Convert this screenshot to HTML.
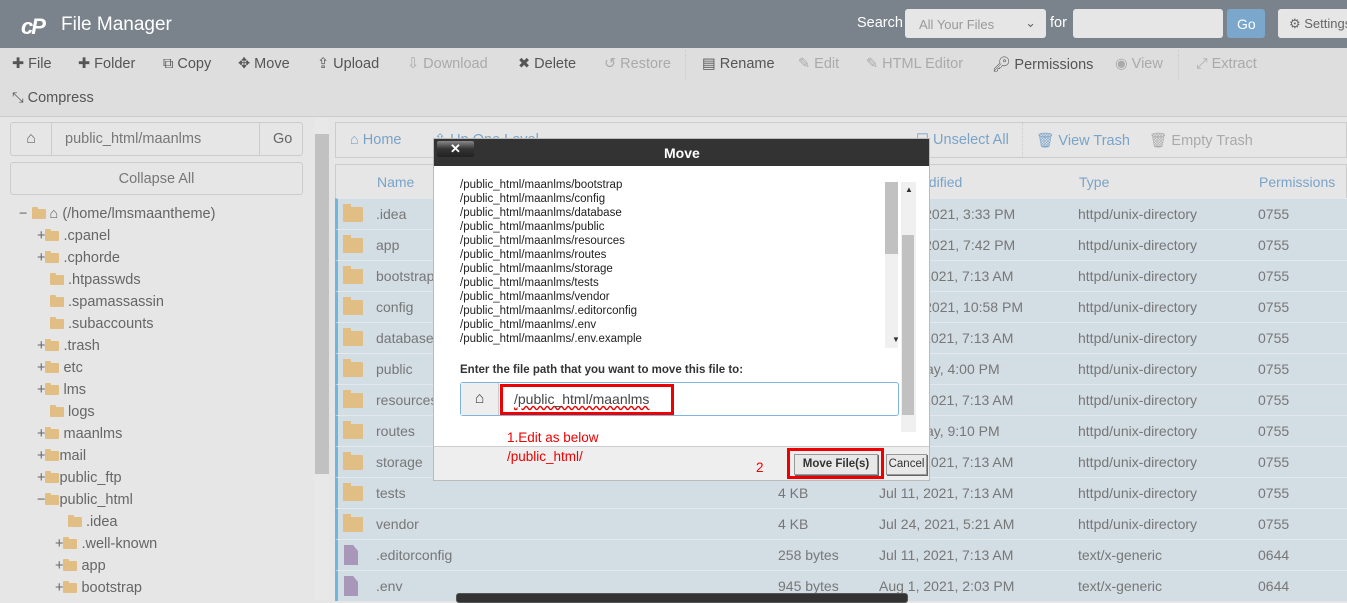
<!DOCTYPE html>
<html><head><meta charset="utf-8">
<style>
*{box-sizing:border-box;margin:0;padding:0}
body{width:1347px;height:600px;overflow:hidden;position:relative;background:#e6e6e6;font-family:"Liberation Sans",sans-serif;color:#666}
.abs{position:absolute}
#top{left:0;top:0;width:1347px;height:48px;background:#7a838b}
#tb{left:0;top:48px;width:1347px;height:69px;background:#dedede;border-bottom:1px solid #ccc}
.tbi{position:absolute;font-size:14.5px;color:#555;white-space:nowrap}
.dis{color:#aaa}
.fold{display:inline-block;width:14px;height:10px;background:#e1be84;border-radius:1px;position:relative;vertical-align:-1px}
.fold:before{content:"";position:absolute;left:0;top:-2px;width:6px;height:3px;background:#e1be84;border-radius:1px 1px 0 0}
.tree{position:absolute;font-size:14.5px;color:#666;white-space:nowrap}
.row{position:absolute;left:335px;width:1012px;height:31px;background:#d3dde4;border-top:1px solid #e2e8ec;border-left:3px solid #6fb6dc;font-size:14px;color:#777}
.row span{position:absolute;top:7px}
.bf{position:absolute;left:5px;top:8px;width:20px;height:15px;background:#e1be84;border-radius:1px}
.bf:before{content:"";position:absolute;left:0;top:-3px;width:8px;height:4px;background:#e1be84}
.doc{position:absolute;left:6px;top:5px;width:14px;height:20px;background:#a897b8;clip-path:polygon(0 0,65% 0,100% 30%,100% 100%,0 100%)}
#dlg{left:433px;top:138px;width:497px;height:343px;background:#fff;border:1px solid #bbb}
.dl{font-size:11.5px;color:#222;line-height:14px;font-family:"Liberation Sans",sans-serif}
.red{color:#e00;font-size:13.5px}
</style></head><body>
<div id="top" class="abs">
 <div class="abs" style="left:21px;top:14px;font:italic bold 22px 'Liberation Sans',sans-serif;color:#fff;letter-spacing:-2px">cP</div>
 <div class="abs" style="left:61px;top:14px;font-size:19px;color:#fff">File Manager</div>
 <div class="abs" style="left:857px;top:15px;font-size:14.5px;color:#fff">Search</div>
 <div class="abs" style="left:905px;top:9px;width:141px;height:29px;background:#e6e6e6;border-radius:3px;font-size:13px;color:#999;padding:8px 14px">All Your Files<span style="position:absolute;right:10px;top:6px;color:#666">⌄</span></div>
 <div class="abs" style="left:1050px;top:15px;font-size:14.5px;color:#fff">for</div>
 <div class="abs" style="left:1073px;top:9px;width:150px;height:29px;background:#e6e6e6;border-radius:3px"></div>
 <div class="abs" style="left:1227px;top:9px;width:38px;height:29px;background:#7ba7cd;border-radius:3px;color:#fff;font-size:14px;padding:7px 10px">Go</div>
 <div class="abs" style="left:1278px;top:9px;width:80px;height:29px;background:#e6e6e6;border-radius:3px;color:#666;font-size:13px;padding:7px 11px;white-space:nowrap">⚙ Settings</div>
</div>
<div id="tb" class="abs">
 <div class="tbi" style="left:12px;top:8px">✚ File</div>
 <div class="tbi" style="left:78px;top:8px">✚ Folder</div>
 <div class="tbi" style="left:163px;top:8px">⧉ Copy</div>
 <div class="tbi" style="left:238px;top:8px">✥ Move</div>
 <div class="tbi" style="left:317px;top:8px">⇪ Upload</div>
 <div class="tbi dis" style="left:407px;top:8px">⇩ Download</div>
 <div class="tbi" style="left:518px;top:8px">✖ Delete</div>
 <div class="tbi dis" style="left:604px;top:8px">↺ Restore</div>
 <div class="abs" style="left:685px;top:2px;width:1px;height:30px;border-left:1px dotted #ccc"></div>
 <div class="tbi" style="left:702px;top:8px">▤ Rename</div>
 <div class="tbi dis" style="left:798px;top:8px">✎ Edit</div>
 <div class="tbi dis" style="left:866px;top:8px">✎ HTML Editor</div>
 <div class="tbi" style="left:992px;top:8px">🔑︎ Permissions</div>
 <div class="tbi dis" style="left:1115px;top:8px">◉ View</div>
 <div class="abs" style="left:1178px;top:2px;width:1px;height:30px;border-left:1px dotted #ccc"></div>
 <div class="tbi dis" style="left:1196px;top:8px">⤢ Extract</div>
 <div class="tbi" style="left:12px;top:42px">⤡ Compress</div>
</div>
<!-- left -->
<div class="abs" style="left:10px;top:122px;width:293px;height:34px;border:1px solid #ccc;border-radius:3px;background:#e6e6e6">
 <div class="abs" style="left:0;top:0;width:41px;height:32px;border-right:1px solid #ccc;text-align:center;padding-top:7px;color:#666">⌂</div>
 <div class="abs" style="left:54px;top:8px;font-size:14.5px;color:#777">public_html/maanlms</div>
 <div class="abs" style="left:248px;top:0;width:44px;height:32px;border-left:1px solid #ccc;font-size:14.5px;padding:8px 0 0 13px">Go</div>
</div>
<div class="abs" style="left:10px;top:162px;width:293px;height:33px;border:1px solid #ccc;border-radius:3px;text-align:center;padding-top:8px;font-size:14.5px;color:#777">Collapse All</div>
<div class="tree" style="left:19px;top:206px">− <span class="fold"></span> ⌂ (/home/lmsmaantheme)</div>
<div class="tree" style="left:37px;top:228px">+<span class="fold"></span> .cpanel</div>
<div class="tree" style="left:37px;top:250px">+<span class="fold"></span> .cphorde</div>
<div class="tree" style="left:50px;top:272px"><span class="fold"></span> .htpasswds</div>
<div class="tree" style="left:50px;top:294px"><span class="fold"></span> .spamassassin</div>
<div class="tree" style="left:50px;top:316px"><span class="fold"></span> .subaccounts</div>
<div class="tree" style="left:37px;top:338px">+<span class="fold"></span> .trash</div>
<div class="tree" style="left:37px;top:360px">+<span class="fold"></span> etc</div>
<div class="tree" style="left:37px;top:382px">+<span class="fold"></span> lms</div>
<div class="tree" style="left:50px;top:404px"><span class="fold"></span> logs</div>
<div class="tree" style="left:37px;top:426px">+<span class="fold"></span> maanlms</div>
<div class="tree" style="left:37px;top:448px">+<span class="fold"></span>mail</div>
<div class="tree" style="left:37px;top:470px">+<span class="fold"></span>public_ftp</div>
<div class="tree" style="left:37px;top:492px">−<span class="fold"></span>public_html</div>
<div class="tree" style="left:68px;top:514px"><span class="fold"></span> .idea</div>
<div class="tree" style="left:55px;top:536px">+<span class="fold"></span> .well-known</div>
<div class="tree" style="left:55px;top:558px">+<span class="fold"></span> app</div>
<div class="tree" style="left:55px;top:580px">+<span class="fold"></span> bootstrap</div>
<div class="abs" style="left:315px;top:118px;width:14px;height:482px;background:#e8e8e8"></div>
<div class="abs" style="left:315px;top:134px;width:14px;height:340px;background:#c1c1c1"></div>
<!-- right -->
<div class="abs" style="left:335px;top:122px;width:1012px;height:36px;border:1px solid #ccc;background:#e6e6e6;font-size:14.5px;color:#7aa3c8">
 <div class="abs" style="left:14px;top:9px">⌂ Home</div>
 <div class="abs" style="left:98px;top:9px">⇧ Up One Level</div>
 <div class="abs" style="left:580px;top:9px">☐ Unselect All</div>
 <div class="abs" style="left:686px;top:0;height:34px;border-left:1px dotted #ccc"></div>
 <div class="abs" style="left:700px;top:9px">🗑︎ View Trash</div>
 <div class="abs" style="left:813px;top:9px;color:#aaa">🗑︎ Empty Trash</div>
</div>
<div class="abs" style="left:335px;top:164px;width:1012px;height:35px;border:1px solid #ccc;background:#e6e6e6;font-size:14px;color:#7aa3c8">
 <div class="abs" style="left:41px;top:9px">Name</div>
 <div class="abs" style="left:543px;top:9px">Last Modified</div>
 <div class="abs" style="left:743px;top:9px">Type</div>
 <div class="abs" style="left:923px;top:9px">Permissions</div>
</div>
<div class="row" style="top:198px"><i class="bf"></i><span style="left:38px">.idea</span><span style="left:440px">4 KB</span><span style="left:541px">Jul 14, 2021, 3:33 PM</span><span style="left:740px">httpd/unix-directory</span><span style="left:920px">0755</span></div>
<div class="row" style="top:229px"><i class="bf"></i><span style="left:38px">app</span><span style="left:440px">4 KB</span><span style="left:541px">Jul 24, 2021, 7:42 PM</span><span style="left:740px">httpd/unix-directory</span><span style="left:920px">0755</span></div>
<div class="row" style="top:260px"><i class="bf"></i><span style="left:38px">bootstrap</span><span style="left:440px">4 KB</span><span style="left:541px">Jul 11, 2021, 7:13 AM</span><span style="left:740px">httpd/unix-directory</span><span style="left:920px">0755</span></div>
<div class="row" style="top:291px"><i class="bf"></i><span style="left:38px">config</span><span style="left:440px">4 KB</span><span style="left:541px">Jul 21, 2021, 10:58 PM</span><span style="left:740px">httpd/unix-directory</span><span style="left:920px">0755</span></div>
<div class="row" style="top:322px"><i class="bf"></i><span style="left:38px">database</span><span style="left:440px">4 KB</span><span style="left:541px">Jul 11, 2021, 7:13 AM</span><span style="left:740px">httpd/unix-directory</span><span style="left:920px">0755</span></div>
<div class="row" style="top:353px"><i class="bf"></i><span style="left:38px">public</span><span style="left:440px">4 KB</span><span style="left:541px">Yesterday, 4:00 PM</span><span style="left:740px">httpd/unix-directory</span><span style="left:920px">0755</span></div>
<div class="row" style="top:384px"><i class="bf"></i><span style="left:38px">resources</span><span style="left:440px">4 KB</span><span style="left:541px">Jul 11, 2021, 7:13 AM</span><span style="left:740px">httpd/unix-directory</span><span style="left:920px">0755</span></div>
<div class="row" style="top:415px"><i class="bf"></i><span style="left:38px">routes</span><span style="left:440px">4 KB</span><span style="left:541px">Yesterday, 9:10 PM</span><span style="left:740px">httpd/unix-directory</span><span style="left:920px">0755</span></div>
<div class="row" style="top:446px"><i class="bf"></i><span style="left:38px">storage</span><span style="left:440px">4 KB</span><span style="left:541px">Jul 11, 2021, 7:13 AM</span><span style="left:740px">httpd/unix-directory</span><span style="left:920px">0755</span></div>
<div class="row" style="top:477px"><i class="bf"></i><span style="left:38px">tests</span><span style="left:440px">4 KB</span><span style="left:541px">Jul 11, 2021, 7:13 AM</span><span style="left:740px">httpd/unix-directory</span><span style="left:920px">0755</span></div>
<div class="row" style="top:508px"><i class="bf"></i><span style="left:38px">vendor</span><span style="left:440px">4 KB</span><span style="left:541px">Jul 24, 2021, 5:21 AM</span><span style="left:740px">httpd/unix-directory</span><span style="left:920px">0755</span></div>
<div class="row" style="top:539px"><i class="doc"></i><span style="left:38px">.editorconfig</span><span style="left:440px">258 bytes</span><span style="left:541px">Jul 11, 2021, 7:13 AM</span><span style="left:740px">text/x-generic</span><span style="left:920px">0644</span></div>
<div class="row" style="top:570px"><i class="doc"></i><span style="left:38px">.env</span><span style="left:440px">945 bytes</span><span style="left:541px">Aug 1, 2021, 2:03 PM</span><span style="left:740px">text/x-generic</span><span style="left:920px">0644</span></div>
<div class="abs" style="left:456px;top:593px;width:452px;height:10px;background:#333;border:1px solid #555;border-radius:3px"></div>
<!-- dialog -->
<div id="dlg" class="abs">
 <div class="abs" style="left:0;top:0;width:495px;height:27px;background:#333"></div>
 <div class="abs" style="left:3px;top:2px;width:37px;height:16px;background:linear-gradient(#888,#333 50%,#222);border-radius:2px;color:#fff;font-weight:bold;text-align:center;font-size:13px;line-height:15px">✕</div>
 <div class="abs" style="left:230px;top:6px;color:#fff;font-weight:bold;font-size:14px">Move</div>
 <div class="abs" style="left:0;top:27px;width:460px;height:180px;overflow:hidden">
  <div class="abs dl" style="left:26px;top:12px">/public_html/maanlms/bootstrap<br>/public_html/maanlms/config<br>/public_html/maanlms/database<br>/public_html/maanlms/public<br>/public_html/maanlms/resources<br>/public_html/maanlms/routes<br>/public_html/maanlms/storage<br>/public_html/maanlms/tests<br>/public_html/maanlms/vendor<br>/public_html/maanlms/.editorconfig<br>/public_html/maanlms/.env<br>/public_html/maanlms/.env.example<br>/public_html/maanlms/.gitattributes</div>
 </div>
 <div class="abs" style="left:451px;top:43px;width:13px;height:166px;background:#f0f0f0"></div>
 <div class="abs" style="left:451px;top:43px;width:13px;height:72px;background:#c1c1c1"></div>
 <div class="abs" style="left:467px;top:43px;width:15px;height:250px;background:#f0f0f0"></div>
 <div class="abs" style="left:468px;top:96px;width:12px;height:180px;background:#c1c1c1"></div>
 <div class="abs" style="left:471px;top:46px;font-size:8px;color:#333">▲</div>
 <div class="abs" style="left:458px;top:196px;font-size:8px;color:#333">▼</div>
 <div class="abs" style="left:26px;top:225px;font-size:11.5px;font-weight:bold;color:#333">Enter the file path that you want to move this file to:</div>
 <div class="abs" style="left:26px;top:243px;width:439px;height:34px;border:1px solid #7fb3e0;border-radius:3px;background:#fff"></div>
 <div class="abs" style="left:27px;top:244px;width:38px;height:32px;background:#eee;border-right:1px solid #ccc;text-align:center;padding-top:7px;color:#444">⌂</div>
 <div class="abs" style="left:66px;top:245px;width:174px;height:31px;border:3px solid #e00"></div>
 <div class="abs" style="left:80px;top:252px;font-size:14px;color:#444;text-decoration:underline wavy #e00">/public_html/maanlms</div>
 <div class="abs red" style="left:73px;top:291px">1.Edit as below</div>
 <div class="abs" style="left:0;top:307px;width:495px;height:34px;background:#eee;border-top:1px solid #ccc"></div>
 <div class="abs red" style="left:73px;top:310px">/public_html/</div>
 <div class="abs red" style="left:322px;top:321px">2</div>
 <div class="abs" style="left:353px;top:309px;width:97px;height:31px;border:3px solid #e00"></div>
 <div class="abs" style="left:360px;top:315px;width:84px;height:21px;background:#e8e8e8;border:1px solid #999;box-shadow:1px 1px 0 #666;font-size:11.5px;font-weight:bold;color:#333;text-align:center;line-height:19px">Move File(s)</div>
 <div class="abs" style="left:452px;top:315px;width:41px;height:21px;background:#e8e8e8;border:1px solid #999;box-shadow:1px 1px 0 #666;font-size:11.5px;color:#333;text-align:center;line-height:19px">Cancel</div>
</div>
</body></html>
